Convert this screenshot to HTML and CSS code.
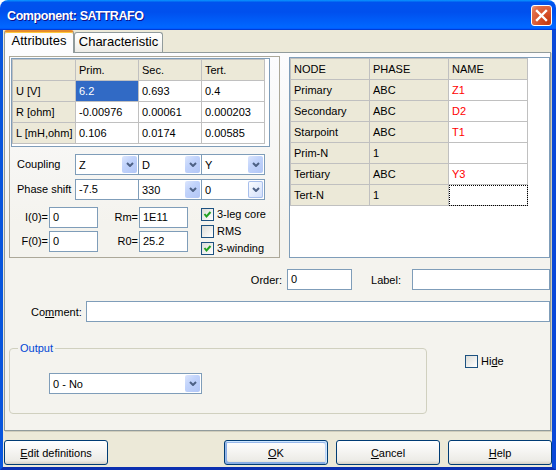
FILE: index.html
```html
<!DOCTYPE html>
<html lang="en">
<head>
    <meta charset="utf-8">
    <title>Component: SATTRAFO</title>
    <link rel="stylesheet" href="styles.css">
</head>
<body>
<div class="window">
    <div class="titlebar">
        <span class="title">Component: SATTRAFO</span>
        <button class="close" type="button" aria-label="Close">
            <svg width="19" height="19" viewBox="0 0 19 19"><path d="M5 5 L14 14 M14 5 L5 14" stroke="#fff" stroke-width="2.4" stroke-linecap="square"/></svg>
        </button>
    </div>

    <div class="client">
        <div class="tabs">
            <div class="tab tab-attr active">Attributes</div>
            <div class="tab tab-char">Characteristic</div>
        </div>

        <div class="page">
            <div class="top">
                <!-- winding data -->
                <div class="attr-box">
                    <div class="grid-frame">
                        <table class="grid attr-grid">
                            <tr><td class="head"></td><td class="head">Prim.</td><td class="head">Sec.</td><td class="head">Tert.</td></tr>
                            <tr><td class="head">U [V]</td><td class="sel">6.2</td><td>0.693</td><td>0.4</td></tr>
                            <tr><td class="head">R [ohm]</td><td>-0.00976</td><td>0.00061</td><td>0.000203</td></tr>
                            <tr><td class="head">L [mH,ohm]</td><td>0.106</td><td>0.0174</td><td>0.00585</td></tr>
                        </table>
                    </div>

                    <div class="field-row coupling">
                        <span class="row-label">Coupling</span>
                        <div class="combo"><span>Z</span><span class="drop"><svg width="8" height="5" viewBox="0 0 8 5"><polyline points="1,1 4,4 7,1" fill="none" stroke="#4d6185" stroke-width="2"/></svg></span></div>
                        <div class="combo"><span>D</span><span class="drop"><svg width="8" height="5" viewBox="0 0 8 5"><polyline points="1,1 4,4 7,1" fill="none" stroke="#4d6185" stroke-width="2"/></svg></span></div>
                        <div class="combo"><span>Y</span><span class="drop"><svg width="8" height="5" viewBox="0 0 8 5"><polyline points="1,1 4,4 7,1" fill="none" stroke="#4d6185" stroke-width="2"/></svg></span></div>
                    </div>
                    <div class="field-row">
                        <span class="row-label">Phase shift</span>
                        <div class="edit">-7.5</div>
                        <div class="combo"><span>330</span><span class="drop"><svg width="8" height="5" viewBox="0 0 8 5"><polyline points="1,1 4,4 7,1" fill="none" stroke="#4d6185" stroke-width="2"/></svg></span></div>
                        <div class="combo"><span>0</span><span class="drop hot"><svg width="8" height="5" viewBox="0 0 8 5"><polyline points="1,1 4,4 7,1" fill="none" stroke="#4d6185" stroke-width="2"/></svg></span></div>
                    </div>

                    <div class="extra">
                        <div class="pairs">
                            <span class="pair-label">I(0)=</span><div class="edit">0</div>
                            <span class="pair-label">Rm=</span><div class="edit">1E11</div>
                            <span class="pair-label">F(0)=</span><div class="edit">0</div>
                            <span class="pair-label">R0=</span><div class="edit">25.2</div>
                        </div>
                        <div class="checks">
                            <div class="check"><span class="box"><svg width="11" height="11" viewBox="0 0 11 11"><polyline points="2.5,5 4.5,7.5 8.5,3" fill="none" stroke="#21a121" stroke-width="2"/></svg></span>3-leg core</div>
                            <div class="check"><span class="box"></span>RMS</div>
                            <div class="check"><span class="box"><svg width="11" height="11" viewBox="0 0 11 11"><polyline points="2.5,5 4.5,7.5 8.5,3" fill="none" stroke="#21a121" stroke-width="2"/></svg></span>3-winding</div>
                        </div>
                    </div>
                </div>

                <!-- node list -->
                <div class="node-box">
                    <table class="grid node-grid">
                        <tr><td class="head">NODE</td><td class="head">PHASE</td><td class="head">NAME</td></tr>
                        <tr><td class="head">Primary</td><td class="head">ABC</td><td class="name">Z1</td></tr>
                        <tr><td class="head">Secondary</td><td class="head">ABC</td><td class="name">D2</td></tr>
                        <tr><td class="head">Starpoint</td><td class="head">ABC</td><td class="name">T1</td></tr>
                        <tr><td class="head">Prim-N</td><td class="head">1</td><td class="name"></td></tr>
                        <tr><td class="head">Tertiary</td><td class="head">ABC</td><td class="name">Y3</td></tr>
                        <tr><td class="head">Tert-N</td><td class="head">1</td><td class="name focus"></td></tr>
                    </table>
                </div>
            </div>

            <div class="order-row">
                <span class="order-label">Order:</span>
                <div class="edit order-edit">0</div>
                <span class="label-label">Label:</span>
                <div class="edit label-edit"></div>
            </div>

            <div class="comment-row">
                <span class="comment-label">Co<u>m</u>ment:</span>
                <div class="edit comment-edit"></div>
            </div>

            <div class="bottom-row">
                <fieldset class="output">
                    <legend>Output</legend>
                    <div class="combo wide"><span>0 - No</span><span class="drop"><svg width="8" height="5" viewBox="0 0 8 5"><polyline points="1,1 4,4 7,1" fill="none" stroke="#4d6185" stroke-width="2"/></svg></span></div>
                </fieldset>
                <div class="check hide"><span class="box"></span>Hi<u>d</u>e</div>
            </div>
        </div>

        <div class="buttons">
            <button class="btn" type="button"><u>E</u>dit definitions</button>
            <button class="btn btn-ok" type="button"><u>O</u>K</button>
            <button class="btn" type="button"><u>C</u>ancel</button>
            <button class="btn" type="button"><u>H</u>elp</button>
        </div>
    </div>
</div>
</body>
</html>
```

FILE: styles.css
```css
* {
    box-sizing: border-box;
}

html, body {
    margin: 0;
    padding: 0;
    background: #ffffff;
}

body {
    font-family: "Liberation Sans", Arial, sans-serif;
    font-size: 11px;
    color: #000000;
}

.window {
    width: 556px;
    height: 470px;
    display: flex;
    flex-direction: column;
}

/* title bar */
.titlebar {
    height: 30px;
    flex: none;
    display: flex;
    align-items: center;
    justify-content: space-between;
    padding: 0 4px 0 7px;
    border-radius: 8px 8px 0 0;
    background: linear-gradient(180deg, #0997ff, #0053ee 8%, #0050ee 40%, #0066ff 88%, #0066ff 93%, #005bff 95%, #003dd7 96%, #003dd7);
}

.title {
    margin-top: 2px;
    color: #ffffff;
    font-weight: bold;
    font-size: 12.5px;
    letter-spacing: -0.4px;
    text-shadow: 1px 1px #0f1089;
}

.close {
    width: 21px;
    height: 21px;
    padding: 0;
    border: 1px solid #ffffff;
    border-radius: 3px;
    background: radial-gradient(circle at 85% 85%, #c43a10 0%, #d9532c 45%, #e2704c 80%, #f0a58a 100%);
    display: flex;
    align-items: center;
    justify-content: center;
}

/* client area */
.client {
    flex: 1;
    display: flex;
    flex-direction: column;
    background: #ece9d8;
    border-left: 3px solid #0855dd;
    border-right: 4px solid #0a48d8;
    border-bottom: 3px solid #0b2fb0;
}

.tabs {
    height: 22px;
    flex: none;
    display: flex;
    align-items: flex-end;
    padding-left: 1px;
}

.tab {
    height: 20px;
    border: 1px solid #919b9c;
    border-bottom: none;
    border-radius: 3px 3px 0 0;
    font-size: 13px;
    line-height: 17px;
    text-align: center;
    background: linear-gradient(180deg, #ffffff, #fafaf8 40%, #ecebe6);
}

.tab-attr {
    width: 70px;
}

.tab-char {
    width: 89px;
}

.tab.active {
    height: 23px;
    margin-bottom: -1px;
    position: relative;
    z-index: 1;
    line-height: 18px;
    background: #fcfcfe;
    border-top: 2px solid #e68b2c;
    box-shadow: inset 0 1px #ffc73c;
}

.page {
    width: 547px;
    height: 379px;
    margin-left: 1px;
    flex: none;
    border: 1px solid #919b9c;
    padding: 3px 0 0 4px;
    background: linear-gradient(180deg, #fcfcfe, #f4f3ee 45%);
    box-shadow: 1px 1px 0 #d0cdbc;
}

.top {
    display: flex;
    align-items: flex-start;
}

.attr-box {
    width: 271px;
    height: 202px;
    border: 1px solid #aca899;
}

.grid-frame {
    width: 259px;
    height: 89px;
    margin: 1px 0 0 1px;
    border: 1px solid #7f9db9;
    background: #ffffff;
}

.node-box {
    width: 261px;
    height: 201px;
    margin: 1px 0 0 9px;
    border: 1px solid #7f9db9;
    background: #ffffff;
}

/* grids */
.grid {
    border-collapse: separate;
    border-spacing: 0;
    table-layout: fixed;
    border-left: 1px solid #c0c0c0;
    border-top: 1px solid #c0c0c0;
    font-size: 11px;
}

.grid td {
    padding: 0 0 0 3px;
    line-height: 20px;
    border-right: 1px solid #c0c0c0;
    border-bottom: 1px solid #c0c0c0;
    white-space: nowrap;
    overflow: hidden;
    background: #ffffff;
}

.grid td.head {
    background: #ece9d8;
}

.grid td.sel {
    background: #316ac5;
    color: #ffffff;
}

.grid td.name {
    color: #ff0000;
}

.grid td.focus {
    outline: 1px dotted #000000;
    outline-offset: -1px;
}

.attr-grid {
    width: 253px;
}

.attr-grid td {
    width: 59px;
}

.node-grid {
    width: 238px;
}

.node-grid td {
    width: 75px;
}

/* edits and combos */
.field-row {
    display: flex;
    height: 21px;
    margin-top: 4px;
}

.field-row.coupling {
    margin-top: 7px;
}

.row-label {
    width: 65px;
    padding-left: 7px;
    line-height: 21px;
}

.edit {
    height: 21px;
    border: 1px solid #7f9db9;
    background: #ffffff;
    padding-left: 3px;
    line-height: 19px;
}

.field-row .edit {
    width: 64px;
}

.combo {
    width: 64px;
    height: 21px;
    border: 1px solid #7f9db9;
    background: #ffffff;
    display: flex;
    align-items: center;
    justify-content: space-between;
    padding: 1px 1px 1px 3px;
}

.combo + .combo,
.edit + .combo {
    margin-left: -1px;
}

.drop {
    width: 15px;
    height: 17px;
    border-radius: 2px;
    display: flex;
    align-items: center;
    justify-content: center;
    background: linear-gradient(135deg, #dce6fd, #c1d3fb 40%, #b2c6f6);
}

.drop.hot {
    background: linear-gradient(135deg, #ffffff, #e6eefd 50%, #cfdcfa);
    box-shadow: inset 0 0 0 1px #a8bfec;
}

.extra {
    display: flex;
    margin-top: 7px;
}

.pairs {
    display: grid;
    grid-template-columns: 39px 49px 41px 49px;
    grid-auto-rows: 21px;
    row-gap: 3px;
}

.pair-label {
    text-align: right;
    padding-right: 1px;
    line-height: 21px;
}

.checks {
    margin-left: 13px;
    display: flex;
    flex-direction: column;
}

.check {
    height: 17px;
    display: flex;
    align-items: flex-start;
    line-height: 15px;
}

.box {
    width: 13px;
    height: 13px;
    margin: 1px 3px 0 0;
    border: 1px solid #1c5180;
    background: linear-gradient(135deg, #dcdcd7, #ffffff);
    display: flex;
    align-items: center;
    justify-content: center;
}

/* lower fields */
.order-row {
    display: flex;
    justify-content: flex-end;
    align-items: center;
    height: 21px;
    margin-top: 11px;
}

.order-label {
    margin-right: 5px;
}

.order-edit {
    width: 65px;
}

.label-label {
    margin: 0 11px 0 19px;
}

.label-edit {
    width: 138px;
}

.comment-row {
    display: flex;
    align-items: center;
    height: 21px;
    margin-top: 11px;
    padding-left: 22px;
}

.comment-label {
    width: 55px;
}

.comment-edit {
    flex: 1;
}

.bottom-row {
    display: flex;
    margin-top: 20px;
}

.output {
    width: 418px;
    height: 72px;
    margin: 0;
    padding: 0;
    border: 1px solid #d0d0bf;
    border-radius: 4px;
}

.output legend {
    margin-left: 8px;
    padding: 0 2px;
    color: #0046d5;
    line-height: 13px;
}

.combo.wide {
    width: 153px;
    margin: 18px 0 0 39px;
}

.check.hide {
    margin: 12px 0 0 38px;
}

/* dialog buttons */
.buttons {
    display: flex;
    margin-top: 9px;
    padding-left: 1px;
}

.btn {
    width: 104px;
    height: 25px;
    margin-left: 8px;
    padding: 0;
    font-family: "Liberation Sans", Arial, sans-serif;
    font-size: 11px;
    color: #000000;
    border: 1px solid #003c74;
    border-radius: 3px;
    background: linear-gradient(180deg, #ffffff, #ecebe6 86%, #d6d0c5);
}

.btn:first-child {
    margin-left: 0;
}

.btn-ok {
    margin-left: 116px;
    box-shadow: inset -1px 1px #cee7ff, inset 1px 2px #98b8ea, inset -2px 2px #bcd4f6, inset 1px -1px #89ade4, inset 2px -2px #89ade4;
}
```
